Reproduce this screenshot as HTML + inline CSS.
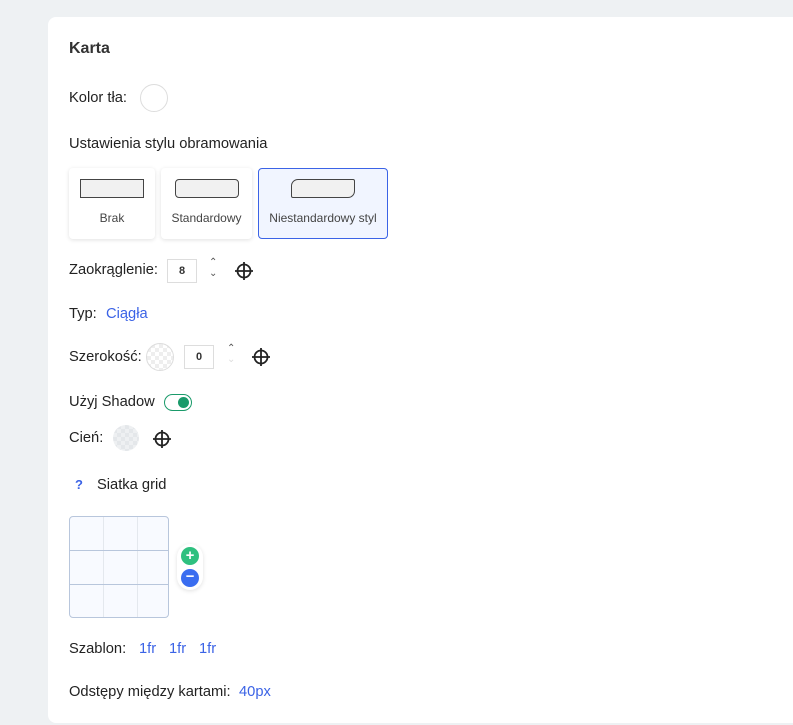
<!DOCTYPE html>
<html><head><meta charset="utf-8"><style>
*{margin:0;padding:0;box-sizing:border-box}
body{width:793px;height:725px;background:#eef1f3;font-family:"Liberation Sans",sans-serif;color:#222;position:relative;overflow:hidden;font-size:14.7px}
.card{position:absolute;left:48px;top:17px;width:760px;height:706px;background:#fff;border-radius:8px}
.a{position:absolute;white-space:nowrap}
.blue{color:#3b63e6}
.opt{position:absolute;top:168px;height:71px;background:#fff;border-radius:4px;box-shadow:0 1px 4px rgba(0,0,0,.12);font-size:12px;color:#444;text-align:center}
.opt .sh{position:absolute;top:11px;height:19px;background:#f1f1f1;border:1px solid #444}
.opt span{position:absolute;left:0;right:0;top:43px}
.num{position:absolute;width:30px;height:24px;border:1px solid #ddd;font-size:11px;font-weight:bold;text-align:center;line-height:22px;color:#333}
.chk{position:absolute;width:28px;height:28px;border-radius:50%;border:1px solid #ddd;background:repeating-conic-gradient(#eee 0 25%,#fff 0 50%) 0 0/8px 8px}
</style></head><body>
<div class="card"></div>
<div class="a" style="left:69px;top:40px;font-size:16px;font-weight:bold;color:#333">Karta</div>
<div class="a" style="left:69px;top:90px">Kolor tła:</div>
<div class="a" style="left:140px;top:84px;width:28px;height:28px;border-radius:50%;border:1px solid #ddd"></div>
<div class="a" style="left:69px;top:136px">Ustawienia stylu obramowania</div>
<div class="opt" style="left:69px;width:86px"><div class="sh" style="left:11px;width:64px"></div><span>Brak</span></div>
<div class="opt" style="left:161px;width:91px"><div class="sh" style="left:14px;width:64px;border-radius:4px"></div><span>Standardowy</span></div>
<div class="opt" style="left:258px;width:130px;background:#f1f5ff;border:1px solid #3b63e6;box-shadow:none"><div class="sh" style="left:32px;top:10px;width:64px;border-radius:7px 2px 7px 2px"></div><span style="top:42px">Niestandardowy styl</span></div>
<div class="a" style="left:69px;top:262px">Zaokrąglenie:</div>
<div class="num" style="left:167px;top:259px">8</div>
<div class="a" style="left:209px;top:257px;font-size:10px;color:#555;line-height:11px">⌃<br>⌄</div>
<svg class="a" style="left:234px;top:261px" width="20" height="20" viewBox="0 0 20 20" fill="none" stroke="#222" stroke-width="1.8"><circle cx="10" cy="10" r="6.5"/><path d="M10 1v18M1 10h18"/></svg>
<div class="a" style="left:69px;top:306px">Typ:</div>
<div class="a blue" style="left:106px;top:306px">Ciągła</div>
<div class="a" style="left:69px;top:349px">Szerokość:</div>
<div class="chk" style="left:146px;top:343px"></div>
<div class="num" style="left:184px;top:345px">0</div>
<div class="a" style="left:227px;top:343px;font-size:10px;color:#555;line-height:11px">⌃<br><span style="color:#ddd">⌄</span></div>
<svg class="a" style="left:251px;top:347px" width="20" height="20" viewBox="0 0 20 20" fill="none" stroke="#222" stroke-width="1.8"><circle cx="10" cy="10" r="6.5"/><path d="M10 1v18M1 10h18"/></svg>
<div class="a" style="left:69px;top:394px">Użyj Shadow</div>
<div class="a" style="left:164px;top:394px;width:28px;height:17px;border:1.5px solid #1a9a6a;border-radius:9px"><div style="position:absolute;right:2px;top:2px;width:11px;height:11px;border-radius:50%;background:#1a9a6a"></div></div>
<div class="a" style="left:69px;top:430px">Cień:</div>
<div class="chk" style="left:113px;top:425px;width:26px;height:26px;border:none;background:repeating-conic-gradient(#e4e7ea 0 25%,#eef0f2 0 50%) 0 0/8px 8px"></div>
<svg class="a" style="left:152px;top:429px" width="20" height="20" viewBox="0 0 20 20" fill="none" stroke="#222" stroke-width="1.8"><circle cx="10" cy="10" r="6.5"/><path d="M10 1v18M1 10h18"/></svg>
<div class="a blue" style="left:75px;top:477px;font-weight:bold;font-size:13px">?</div>
<div class="a" style="left:97px;top:477px">Siatka grid</div>
<div class="a" style="left:69px;top:516px;width:100px;height:102px;border:1px solid #b8c6dc;border-radius:4px;background:#f8faff;overflow:hidden">
<div style="position:absolute;left:33px;top:0;bottom:0;width:1px;background:#e4e8ee"></div>
<div style="position:absolute;left:67px;top:0;bottom:0;width:1px;background:#e4e8ee"></div>
<div style="position:absolute;top:33px;left:0;right:0;height:1px;background:#b8c6dc"></div>
<div style="position:absolute;top:67px;left:0;right:0;height:1px;background:#b8c6dc"></div>
</div>
<div class="a" style="left:177px;top:544px;width:26px;height:46px;border-radius:13px;background:#fff;box-shadow:0 1px 4px rgba(0,0,0,.12)"></div>
<div class="a" style="left:181px;top:547px;width:18px;height:18px;border-radius:50%;background:#2ec07f;color:#fff;text-align:center;line-height:18px;font-weight:bold">+</div>
<div class="a" style="left:181px;top:569px;width:18px;height:18px;border-radius:50%;background:#3a6df0;color:#fff;text-align:center;line-height:17px;font-weight:bold">−</div>
<div class="a" style="left:69px;top:641px">Szablon:</div>
<div class="a blue" style="left:139px;top:641px">1fr</div>
<div class="a blue" style="left:169px;top:641px">1fr</div>
<div class="a blue" style="left:199px;top:641px">1fr</div>
<div class="a" style="left:69px;top:684px">Odstępy między kartami:</div>
<div class="a blue" style="left:239px;top:684px">40px</div>
</body></html>
